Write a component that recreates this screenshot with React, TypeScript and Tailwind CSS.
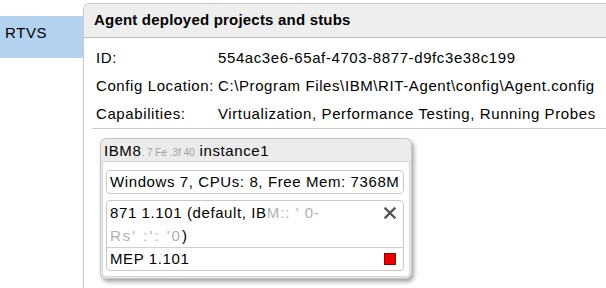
import React from 'react';

const rows = [
  { label: 'ID:', value: '554ac3e6-65af-4703-8877-d9fc3e38c199' },
  { label: 'Config Location:', value: 'C:\\Program Files\\IBM\\RIT-Agent\\config\\Agent.config' },
  { label: 'Capabilities:', value: 'Virtualization, Performance Testing, Running Probes' },
];

const App: React.FC = () => {
  return (
    <div className="flex w-[606px] h-[288px] overflow-hidden bg-white text-[15px] tracking-[0.6px] text-black font-['Liberation_Sans',Arial,sans-serif]">
      <div className="w-[83px] shrink-0 pt-[16px]">
        <div className="h-[42px] bg-[#b3d2f0] pl-[5px] pt-[8px] leading-[17px]">RTVS</div>
      </div>

      <div className="flex-1 min-w-0 mt-[3px] border-l border-t border-[#c9c9c9] rounded-tl-[6px]">
        <div className="h-[34px] bg-[#eeeeee] border-b border-[#bdbdbd] rounded-tl-[6px] pl-[10px] flex items-center font-bold tracking-[0.2px] whitespace-nowrap">
          Agent deployed projects and stubs
        </div>

        <div className="ml-[8px]">
          <div className="pt-[6px] pl-[4px] border-b border-[#c8c8c8]">
            {rows.map(r => (
              <div key={r.label} className="flex h-[28px] leading-[28px] whitespace-nowrap">
                <div className="w-[122px] shrink-0">{r.label}</div>
                <div>{r.value}</div>
              </div>
            ))}
          </div>

          <div className="mt-[9px] ml-[8px] w-[312px] h-[141px] border border-[#c4c4c4] rounded-[6px] bg-[#ebebeb] shadow-[2px_3px_4px_rgba(0,0,0,0.35)] flex flex-col">
            <div className="h-[22px] shrink-0 pl-[3px] leading-[23px] whitespace-nowrap">
              IBM8<span className="text-[10px] tracking-[0px] text-[#a0a0a0]">. 7 Fe .3f 40</span> instance1
            </div>
            <div className="flex-1 mx-[1px] mb-[1px] bg-white border border-[#d4d4d4] rounded-b-[4px] pt-[8px] pl-[3px]">
              <div className="w-[298px] h-[24px] border border-[#c8c8c8] rounded-[4px] pl-[3px] leading-[22px] whitespace-nowrap">
                Windows 7, CPUs: 8, Free Mem: 7368M
              </div>
              <div className="mt-[6px] w-[298px] border border-[#c8c8c8] rounded-[4px]">
                <div className="flex justify-between border-b border-[#d0d0d0] pl-[3px] pr-[7px] leading-[23px]">
                  <div className="whitespace-nowrap">
                    871 1.101 (default, IB<span className="text-[#b0b0b0] tracking-[1px]">M:: ' 0-</span>
                    <br />
                    <span className="text-[#b0b0b0] tracking-[2px]">Rs' :': '0</span>)
                  </div>
                  <svg width="12" height="12" viewBox="0 0 12 12" className="mt-[6px]">
                    <path d="M1.5 1.5 L10.5 10.5 M10.5 1.5 L1.5 10.5" stroke="#555" strokeWidth="2.4" strokeLinecap="square" />
                  </svg>
                </div>
                <div className="flex justify-between items-center h-[22px] pl-[3px] pr-[7px] leading-[22px]">
                  <span>MEP 1.101</span>
                  <span className="w-[12px] h-[12px] bg-[#ee0000] border border-[#990000]" />
                </div>
              </div>
            </div>
          </div>
        </div>
      </div>
    </div>
  );
};

export default App;
